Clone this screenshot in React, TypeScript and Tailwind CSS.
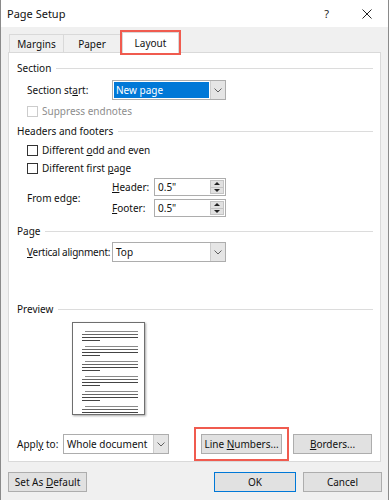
import React from 'react';

function Heading({ label }: { label: string }) {
  return (
    <div className="flex items-center h-[14px] pl-[8px] pr-[7px]">
      <span>{label}</span>
      <div className="flex-1 h-px bg-[#dcdcdc] ml-[5px]" />
    </div>
  );
}

function Chevron() {
  return (
    <svg width="8" height="5" viewBox="0 0 8 5" fill="none">
      <path d="M0.5 0.5 L4 4 L7.5 0.5" stroke="#606060" strokeWidth="1" />
    </svg>
  );
}

function Select({ value, width, selected }: { value: string; width: string; selected?: boolean }) {
  return (
    <div className={`flex shrink-0 h-[20px] border border-[#adadad] bg-white ${width}`}>
      <div className="flex-1 p-px">
        <div className={`h-full flex items-center pl-[2px] ${selected ? 'bg-[#0078d7] text-white' : ''}`}>{value}</div>
      </div>
      <div className="w-[15px] flex items-center justify-center bg-[#e5e5e5] border-l border-[#cccccc]">
        <Chevron />
      </div>
    </div>
  );
}

function Checkbox({ children, disabled }: { children: React.ReactNode; disabled?: boolean }) {
  return (
    <div className={`flex items-center h-[14px] pl-[18px] ${disabled ? 'text-[#8d8d8d]' : ''}`}>
      <div className={`w-[11px] h-[11px] border bg-white ${disabled ? 'border-[#cccccc]' : 'border-[#333333]'}`} />
      <span className="ml-[4px]">{children}</span>
    </div>
  );
}

function Spinner({ value }: { value: string }) {
  return (
    <div className="flex w-[72px] h-[18px] border border-[#adadad] bg-white">
      <div className="flex-1 flex items-center pl-[3px]">{value}</div>
      <div className="w-[14px] flex flex-col my-px mr-px">
        <div className="flex-1 flex items-center justify-center bg-[#e1e1e1] border border-[#c4c4c4]">
          <div className="w-0 h-0 border-x-[3px] border-x-transparent border-b-[3px] border-b-[#222]" />
        </div>
        <div className="flex-1 flex items-center justify-center bg-[#e1e1e1] border border-t-0 border-[#c4c4c4]">
          <div className="w-0 h-0 border-x-[3px] border-x-transparent border-t-[3px] border-t-[#222]" />
        </div>
      </div>
    </div>
  );
}

function PageLines() {
  return (
    <div className="flex flex-col gap-[5px]">
      {[0, 1, 2, 3, 4, 5].map(i => (
        <div key={i} className="flex flex-col gap-[2px]">
          <div className="h-px ml-[12px] w-[53px] bg-[#8a8a8a]" />
          <div className="h-px ml-[9px] w-[56px] bg-[#666666]" />
          <div className="h-px ml-[9px] w-[56px] bg-[#444444]" />
          <div className="h-px ml-[9px] w-[18px] bg-[#444444]" />
        </div>
      ))}
    </div>
  );
}

function Button({ children, width, primary }: { children: React.ReactNode; width: string; primary?: boolean }) {
  return (
    <div className={`h-[20px] flex items-center justify-center bg-[#e1e1e1] border ${primary ? 'border-[#0078d7]' : 'border-[#adadad]'} ${width}`}>
      <span>{children}</span>
    </div>
  );
}

export default function App() {
  return (
    <div className="w-[389px] h-[500px] bg-[#f0f0f0] border-x border-[#8a8a8a] text-[10px] text-[#111] font-['Noto_Sans',sans-serif] leading-none whitespace-nowrap overflow-hidden">
      <div className="h-[27px] bg-white flex items-center pl-[6px]">
        <span className="text-[11px]">Page Setup</span>
        <span className="ml-auto mr-[33px] text-[11px] text-[#222]">?</span>
        <svg width="10" height="10" viewBox="0 0 10 10" className="mr-[16px]">
          <path d="M0.5 0.5 L9.5 9.5 M9.5 0.5 L0.5 9.5" stroke="#222" strokeWidth="1" />
        </svg>
      </div>

      <div className="flex items-end h-[25px] pl-[8px]">
        <div className="w-[55px] h-[18px] flex items-center justify-center border border-b-0 border-[#d9d9d9]">Margins</div>
        <div className="w-[57px] h-[18px] flex items-center justify-center border border-l-0 border-b-0 border-[#d9d9d9]">Paper</div>
        <div className="relative z-10 -mb-px w-[57px] h-[21px] ml-px flex items-center justify-center bg-white border border-b-0 border-[#d9d9d9] outline-2 outline-[#f05b4f] outline-offset-0">Layout</div>
      </div>

      <div className="mx-[7px] h-[410px] border border-[#d9d9d9] bg-white pt-[8px]">
        <Heading label="Section" />
        <div className="flex items-center mt-[5px] pl-[18px]">
          <span className="w-[85px] shrink-0">Section st<u>a</u>rt:</span>
          <Select value="New page" width="w-[114px]" selected />
        </div>
        <div className="mt-[4px]">
          <Checkbox disabled>Suppress endnotes</Checkbox>
        </div>

        <div className="mt-[6px]">
          <Heading label="Headers and footers" />
        </div>
        <div className="mt-[5px]">
          <Checkbox>Different <u>o</u>dd and even</Checkbox>
        </div>
        <div className="mt-[4px]">
          <Checkbox>Different first <u>p</u>age</Checkbox>
        </div>
        <div className="flex items-center mt-[3px] pl-[18px]">
          <span className="w-[85px] shrink-0">From edge:</span>
          <div className="flex flex-col gap-[3px]">
            <div className="flex items-center">
              <span className="w-[42px] shrink-0"><u>H</u>eader:</span>
              <Spinner value={'0.5"'} />
            </div>
            <div className="flex items-center">
              <span className="w-[42px] shrink-0"><u>F</u>ooter:</span>
              <Spinner value={'0.5"'} />
            </div>
          </div>
        </div>

        <div className="mt-[7px]">
          <Heading label="Page" />
        </div>
        <div className="flex items-center mt-[4px] pl-[18px]">
          <span className="w-[85px] shrink-0 tracking-[-0.25px]"><u>V</u>ertical alignment:</span>
          <Select value="Top" width="w-[114px]" />
        </div>

        <div className="mt-[40px]">
          <Heading label="Preview" />
        </div>
        <div className="mt-[6px] ml-[63px] w-[73px] h-[93px] border border-[#6f6f6f] shadow-[1px_1px_2px_rgba(0,0,0,0.35)] pt-[8px] overflow-hidden bg-white">
          <PageLines />
        </div>

        <div className="flex items-center mt-[12px] pl-[8px]">
          <span className="w-[46px] shrink-0">Appl<u>y</u> to:</span>
          <Select value="Whole document" width="w-[106px]" />
          <div className="ml-[25px] border-2 border-[#f05b4f] p-[5px]">
            <Button width="w-[81px]">Line <u>N</u>umbers...</Button>
          </div>
          <div className="ml-[4px]">
            <Button width="w-[79px]"><u>B</u>orders...</Button>
          </div>
        </div>
      </div>

      <div className="flex items-center mt-[10px] pl-[7px]">
        <Button width="w-[79px]">Set As <u>D</u>efault</Button>
        <div className="ml-auto flex gap-[7px] mr-[6px]">
          <Button width="w-[82px]" primary>OK</Button>
          <Button width="w-[79px]">Cancel</Button>
        </div>
      </div>
    </div>
  );
}
